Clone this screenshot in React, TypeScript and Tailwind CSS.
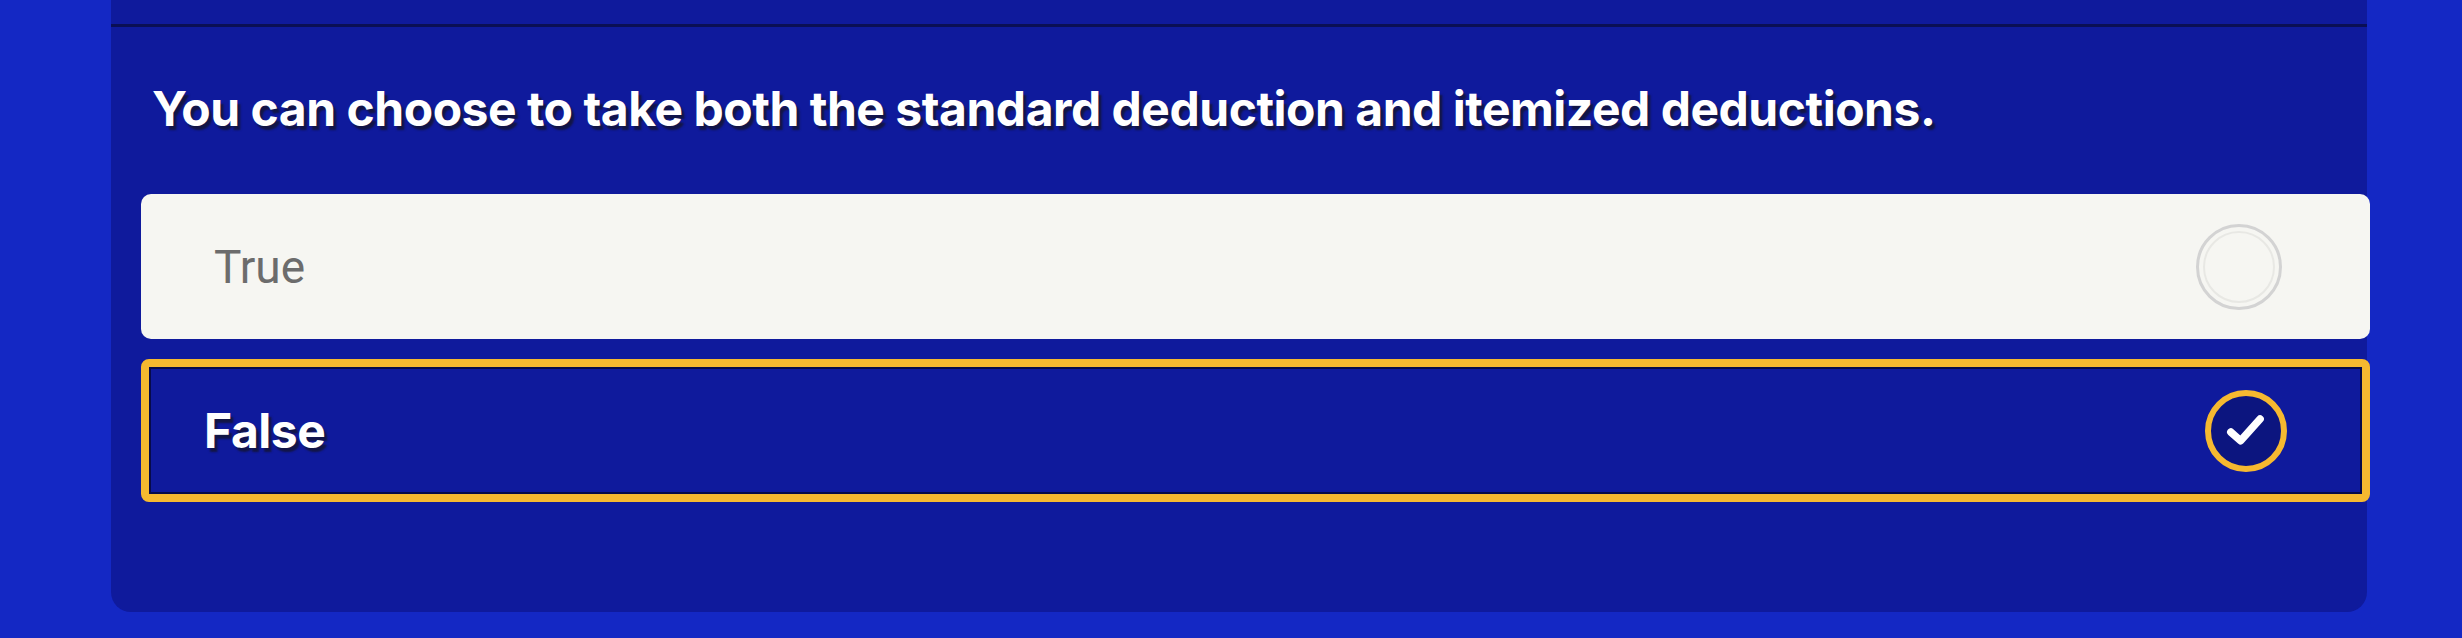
import React from "react";

type Option = { id: string; label: string };

const options: Option[] = [
  { id: "true", label: "True" },
  { id: "false", label: "False" },
];

function CheckMark() {
  return (
    <svg viewBox="0 0 48 48" className="h-[52px] w-[52px]" fill="none">
      <path d="M10 25 L19 33 L37 13" stroke="#ffffff" strokeWidth="7" strokeLinecap="round" strokeLinejoin="round" />
    </svg>
  );
}

function OptionRow({ option, selected }: { option: Option; selected: boolean }) {
  if (selected) {
    return (
      <div className="flex h-[143px] items-center justify-between rounded-[8px] border-[8px] border-[#f6b930] bg-[#0f1a9c] pl-[55px] pr-[75px] shadow-[inset_0_0_0_2px_#070b4a]">
        <span className="font-['Inter',sans-serif] text-[48px] font-bold leading-none tracking-[-0.01em] text-white [text-shadow:3px_4px_2px_rgba(20,20,40,0.75)]">
          {option.label}
        </span>
        <div className="flex h-[82px] w-[82px] items-center justify-center rounded-full border-[6px] border-[#f6b930] bg-[#0c157f]">
          <CheckMark />
        </div>
      </div>
    );
  }

  return (
    <div className="flex h-[145px] items-center justify-between rounded-[10px] bg-[#f6f6f2] pl-[73px] pr-[88px]">
      <span className="font-['Roboto',sans-serif] text-[46px] font-normal leading-none text-[#6c6c6c]">{option.label}</span>
      <div className="flex h-[86px] w-[86px] items-center justify-center rounded-full border-[3px] border-[#d3d3d3]">
        <div className="h-[72px] w-[72px] rounded-full border-[2px] border-[#e8e8e4]" />
      </div>
    </div>
  );
}

export default function App() {
  return (
    <div className="h-[638px] w-full overflow-hidden bg-[#1428c4]">
      <div className="ml-[111px] flex h-[612px] w-[2256px] flex-col rounded-b-[20px] bg-[#0f1a9c]">
        <div className="mt-[24px] h-[3px] bg-[#0a0f55]" />
        <h2 className="ml-[41px] mt-[58px] font-['Inter',sans-serif] text-[48px] font-bold leading-none tracking-[-0.01em] text-white [text-shadow:3px_4px_2px_rgba(20,20,40,0.75)]">
          You can choose to take both the standard deduction and itemized deductions.
        </h2>
        <div className="-mr-[3px] ml-[30px] mt-[61px] flex flex-col gap-[20px]">
          {options.map((o) => (
            <OptionRow key={o.id} option={o} selected={o.id === "false"} />
          ))}
        </div>
      </div>
    </div>
  );
}
